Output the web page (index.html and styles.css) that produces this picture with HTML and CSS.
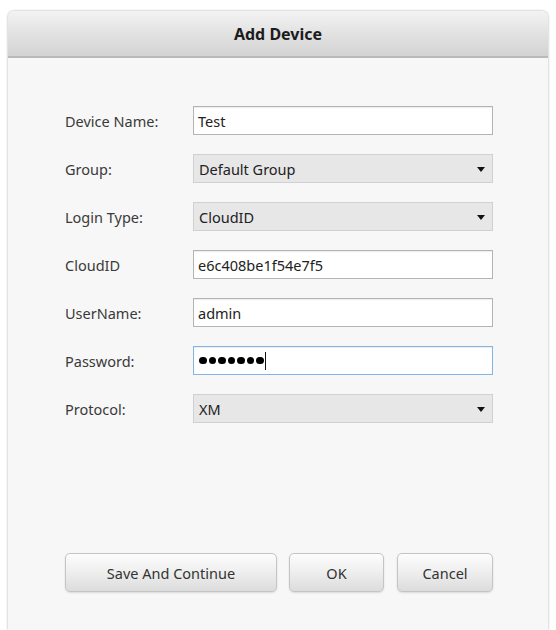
FILE: index.html
```html
<!DOCTYPE html>
<html>
<head>
<meta charset="utf-8">
<link rel="stylesheet" href="styles.css">
</head>
<body>
<div class="dialog">
  <div class="header">Add Device</div>
  <div class="content">
    <div class="form">
      <div class="row">
        <div class="label">Device Name:</div>
        <div class="field input">Test</div>
      </div>
      <div class="row">
        <div class="label">Group:</div>
        <div class="field select">Default Group<span class="arrow"></span></div>
      </div>
      <div class="row">
        <div class="label">Login Type:</div>
        <div class="field select">CloudID<span class="arrow"></span></div>
      </div>
      <div class="row">
        <div class="label">CloudID</div>
        <div class="field input">e6c408be1f54e7f5</div>
      </div>
      <div class="row">
        <div class="label">UserName:</div>
        <div class="field input">admin</div>
      </div>
      <div class="row">
        <div class="label">Password:</div>
        <div class="field input focus" aria-label="●●●●●●●"><span class="dot"></span><span class="dot"></span><span class="dot"></span><span class="dot"></span><span class="dot"></span><span class="dot"></span><span class="dot"></span><span class="caret"></span></div>
      </div>
      <div class="row">
        <div class="label">Protocol:</div>
        <div class="field select">XM<span class="arrow"></span></div>
      </div>
    </div>
    <div class="buttons">
      <div class="btn btn-save">Save And Continue</div>
      <div class="btn btn-ok">OK</div>
      <div class="btn btn-cancel">Cancel</div>
    </div>
  </div>
</div>
</body>
</html>
```
FILE: styles.css
```css
html, body {
  margin: 0;
  padding: 0;
  background: #ffffff;
  font-family: "Noto Sans", "Open Sans", sans-serif;
  font-size: 14.5px;
  color: #333;
  overflow: hidden;
}
.dialog {
  margin: 11px 0 0 8px;
  width: 540px;
  height: 619px;
  background: #f7f7f7;
  border-radius: 6px 6px 0 0;
  box-shadow: -1px 0 2px rgba(0, 0, 0, 0.12), 1px 0 2px rgba(0, 0, 0, 0.12), 0 -1px 2px rgba(0, 0, 0, 0.08);
}
.header {
  height: 44px;
  border-radius: 6px 6px 0 0;
  background: linear-gradient(to bottom, #f3f3f3 0%, #e2e2e2 50%, #d3d3d3 100%);
  border-bottom: 2px solid #b9b9b9;
  display: flex;
  align-items: center;
  justify-content: center;
  font-weight: bold;
  font-size: 16px;
  color: #1c1c1c;
  padding-top: 1px;
}
.content {
  padding: 48px 0 0 57px;
}
.form {
  display: flex;
  flex-direction: column;
  gap: 19px;
}
.row {
  display: flex;
  align-items: center;
  height: 29px;
}
.label {
  width: 128px;
  color: #3a3a3a;
}
.field {
  width: 300px;
  height: 29px;
  box-sizing: border-box;
  display: flex;
  align-items: center;
  padding-left: 4px;
  color: #222;
  position: relative;
}
.input {
  background: #fff;
  border: 1px solid #b4b4b4;
  box-shadow: inset 0 1px 1px rgba(0, 0, 0, 0.08);
}
.input.focus {
  border-color: #86b4e2;
}
.select {
  background: #e7e7e7;
  border: 1px solid #d0d0d0;
  padding-left: 5px;
}
.arrow {
  position: absolute;
  right: 7px;
  top: 12px;
  width: 0;
  height: 0;
  border-left: 4px solid transparent;
  border-right: 4px solid transparent;
  border-top: 5px solid #111;
}
.dot {
  display: inline-block;
  width: 7.5px;
  height: 7.5px;
  border-radius: 50%;
  background: #000;
  margin-right: 2px;
}
.dot:first-child {
  margin-left: 1px;
}
.caret {
  display: inline-block;
  width: 1px;
  height: 18px;
  background: #111;
  margin-left: -1px;
}
.buttons {
  display: flex;
  margin-top: 130px;
}
.btn {
  height: 39px;
  box-sizing: border-box;
  border: 1px solid #c4c4c4;
  border-radius: 5px;
  background: linear-gradient(to bottom, #fdfdfd 0%, #eeeeee 50%, #dcdcdc 100%);
  box-shadow: 0 1px 2px rgba(0, 0, 0, 0.12);
  display: flex;
  align-items: center;
  justify-content: center;
  color: #333;
}
.btn-save { width: 212px; }
.btn-ok { width: 95px; margin-left: 12px; }
.btn-cancel { width: 96px; margin-left: 13px; }
```
